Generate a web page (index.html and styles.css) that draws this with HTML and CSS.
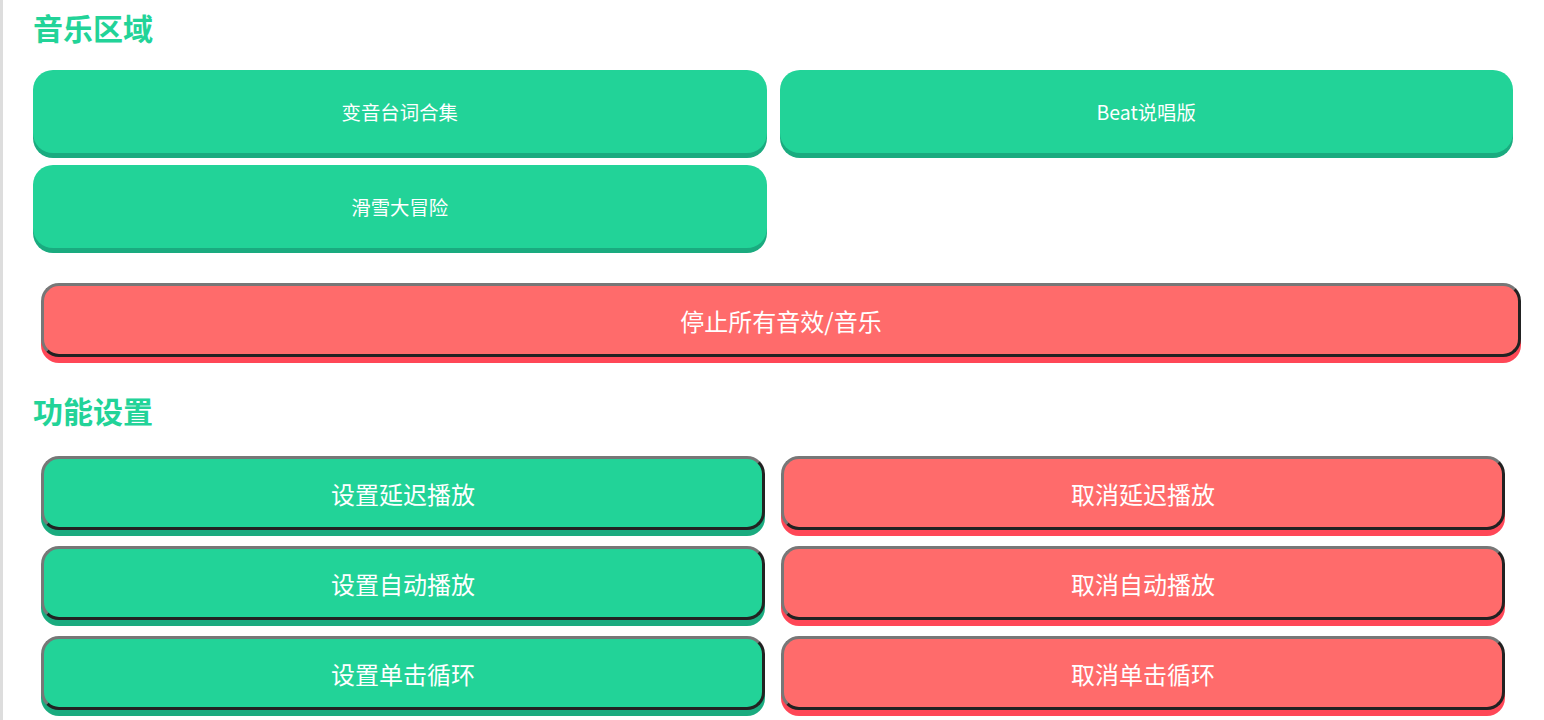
FILE: index.html
```html
<!DOCTYPE html>
<html lang="zh-CN">
<head>
  <meta charset="UTF-8">
  <title>音效面板</title>
  <link rel="stylesheet" href="styles.css">
</head>
<body>

<div class="page">
  <h2 class="section-title">音乐区域</h2>

  <div class="music-grid">
    <button class="music-btn">变音台词合集</button>
    <button class="music-btn">Beat说唱版</button>
    <button class="music-btn">滑雪大冒险</button>
  </div>

  <button class="big-btn btn-red stop-btn">停止所有音效/音乐</button>

  <h2 class="section-title">功能设置</h2>

  <div class="setting-grid">
    <button class="big-btn btn-green">设置延迟播放</button>
    <button class="big-btn btn-red">取消延迟播放</button>
    <button class="big-btn btn-green">设置自动播放</button>
    <button class="big-btn btn-red">取消自动播放</button>
    <button class="big-btn btn-green">设置单击循环</button>
    <button class="big-btn btn-red">取消单击循环</button>
  </div>
</div>

</body>
</html>
```

FILE: styles.css
```css
body {
  margin: 0;
  font-family: "Noto Sans CJK SC", "Noto Sans", sans-serif;
  background: #fff;
  overflow: hidden;
}

.page {
  border-left: 3px solid #dddddd;
  padding: 0 31px 0 30px;
  min-height: 100vh;
}

.section-title {
  margin: 0;
  font-size: 30px;
  line-height: 40px;
  font-weight: bold;
  color: #22d398;
}

.page > .section-title:first-child {
  padding-top: 7px;
  margin-bottom: 23px;
}

.music-grid {
  display: grid;
  grid-template-columns: 1fr 1fr;
  column-gap: 13px;
  row-gap: 12px;
}

button {
  font-family: inherit;
  cursor: pointer;
  color: #fff;
}

.music-btn {
  height: 83px;
  padding-bottom: 2px;
  border: none;
  border-radius: 20px;
  background: #22d398;
  box-shadow: 0 5px 0 #1aab7f;
  font-size: 19.4px;
}

.big-btn {
  height: 74px;
  margin: 8px;
  border: 3px solid;
  border-color: #777 #222 #222 #777;
  border-radius: 18px;
  font-size: 24px;
}

.btn-green {
  background: #22d398;
  box-shadow: 0 6px 0 #1aab7f;
}

.btn-red {
  background: #ff6b6b;
  box-shadow: 0 6px 0 #ff4757;
}

.stop-btn {
  display: block;
  width: 100%;
  margin-top: 35px;
  margin-bottom: 33px;
}

.setting-grid {
  display: grid;
  grid-template-columns: 1fr 1fr;
  margin-top: 18px;
}
```
